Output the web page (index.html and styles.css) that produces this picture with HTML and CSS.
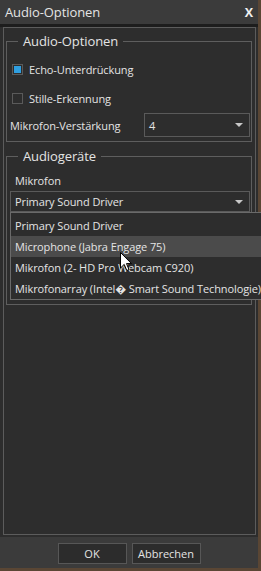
FILE: index.html
```html
<!DOCTYPE html>
<html>
<head>
    <link rel="stylesheet" href="styles.css">
</head>
<body>

<div class="window">
    <div class="titlebar">
        <span>Audio-Optionen</span>
        <span class="close">X</span>
    </div>
    <div class="content">
        <div class="panel">
            <fieldset class="group first">
                <legend>Audio-Optionen</legend>
                <div class="check-row row1">
                    <span class="checkbox checked"></span>
                    <span>Echo-Unterdrückung</span>
                </div>
                <div class="check-row row2">
                    <span class="checkbox"></span>
                    <span>Stille-Erkennung</span>
                </div>
                <div class="field-row">
                    <span>Mikrofon-Verstärkung</span>
                    <div class="combo gain"><span>4</span><span class="arrow"></span></div>
                </div>
            </fieldset>
            <fieldset class="group second">
                <legend>Audiogeräte</legend>
                <div class="label">Mikrofon</div>
                <div class="combo-wrap">
                    <div class="combo"><span>Primary Sound Driver</span><span class="arrow"></span></div>
                    <ul class="dropdown">
                        <li>Primary Sound Driver</li>
                        <li class="hover">Microphone (Jabra Engage 75)</li>
                        <li>Mikrofon (2- HD Pro Webcam C920)</li>
                        <li>Mikrofonarray (Intel&#xFFFD; Smart Sound Technologie)</li>
                    </ul>
                </div>
            </fieldset>
        </div>
    </div>
    <div class="footer">
        <button>OK</button>
        <button>Abbrechen</button>
    </div>
</div>

<svg class="cursor" width="13" height="20" viewBox="0 0 13 20">
    <path d="M0.5 0.5 L0.5 16 L4.2 12.4 L6.8 18.5 L9 17.6 L6.5 11.6 L11.5 11.6 Z" fill="#fff" stroke="#000" stroke-width="1"/>
</svg>

</body>
</html>
```

FILE: styles.css
```css
body {
    margin: 0;
    background: #5a4634;
    font-family: "Open Sans", sans-serif;
    font-size: 11px;
    letter-spacing: -0.1px;
    color: #e4e4e4;
}
.window {
    width: 258px;
    height: 568px;
    background: #2d2d2d;
    display: flex;
    flex-direction: column;
}
.titlebar {
    height: 24px;
    background: #3b3b3b;
    border-bottom: 3px solid #1d1d1d;
    display: flex;
    justify-content: space-between;
    align-items: center;
    padding: 0 5px 0 5px;
    font-size: 13px;
    flex-shrink: 0;
}
.close {
    font-weight: bold;
    font-size: 12.5px;
    color: #f0f0f0;
}
.content {
    flex: 1;
    display: flex;
    padding: 0 2px 2px 3px;
}
.panel {
    flex: 1;
    border: 1px solid #5c5c5c;
    padding: 0 3px 0 2px;
}
.group {
    margin: 0;
    border: 1px solid #5e5e5e;
    padding: 0 1px 4px 5px;
}
.group legend {
    font-size: 13px;
    line-height: 18px;
    padding: 0 5px;
    margin-left: 6px;
}
.group.first {
    margin-top: 4px;
}
.group.second {
    margin-top: 5px;
    padding-bottom: 92px;
}
.check-row {
    display: flex;
    align-items: center;
    height: 20px;
    gap: 6px;
}
.row1 {
    margin-top: 9px;
}
.row2 {
    margin-top: 9px;
}
.checkbox {
    width: 9px;
    height: 9px;
    border: 1px solid #5a5a5a;
    background: #2d2d2d;
    display: flex;
    align-items: center;
    justify-content: center;
}
.checkbox.checked::after {
    content: "";
    width: 7px;
    height: 7px;
    background: #2f9fe0;
}
.field-row {
    display: flex;
    align-items: center;
    justify-content: space-between;
    margin: 5px 0 0 -2px;
}
.combo {
    display: flex;
    align-items: center;
    justify-content: space-between;
    border: 1px solid #5a5a5a;
    background: #2d2d2d;
    height: 19px;
    padding: 0 6px 0 4px;
}
.combo.gain {
    width: 94px;
    height: 22px;
}
.arrow {
    width: 0;
    height: 0;
    border-left: 4px solid transparent;
    border-right: 4px solid transparent;
    border-top: 4px solid #c8c8c8;
}
.label {
    margin: 8px 0 0 3px;
    line-height: 16px;
}
.combo-wrap {
    position: relative;
    margin: 2px 0 0 -2px;
}
.dropdown {
    position: absolute;
    top: 100%;
    left: 0;
    width: 250px;
    margin: 0;
    padding: 2px 0 0;
    list-style: none;
    background: #2d2d2d;
    border: 1px solid #6a6a6a;
    white-space: nowrap;
    z-index: 2;
}
.dropdown li {
    height: 21px;
    line-height: 21px;
    padding-left: 4px;
}
.dropdown li.hover {
    background: #4b4b4b;
}
.footer {
    height: 31px;
    flex-shrink: 0;
    background: #3b3b3b;
    display: flex;
    justify-content: center;
    align-items: flex-start;
    gap: 5px;
    padding-top: 6px;
    box-sizing: border-box;
}
button {
    width: 69px;
    height: 21px;
    background: #2c2c2c;
    border: 1px solid #575757;
    color: #e4e4e4;
    font-family: "Open Sans", sans-serif;
    font-size: 11px;
    padding: 0;
}
.cursor {
    position: absolute;
    left: 120px;
    top: 252px;
    z-index: 3;
}
```
